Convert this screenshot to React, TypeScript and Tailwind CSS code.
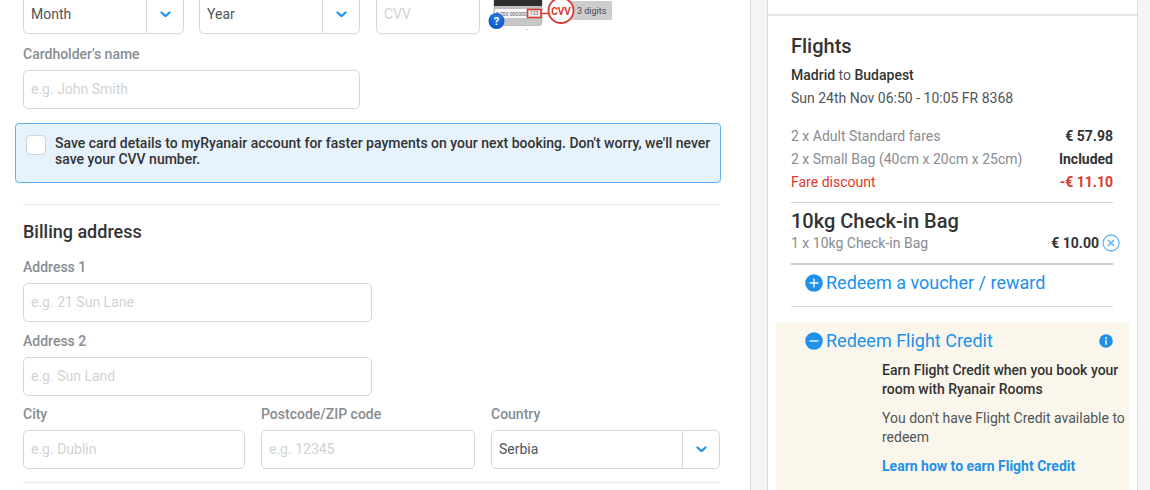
import React, { useState } from 'react';

const inputClass =
    'h-[39px] w-full rounded-[5px] border border-[#d5d9da] bg-white px-[7px] pb-0.5 text-sm text-[#4f5559] placeholder:text-[#cfd3d5] outline-none focus:border-[#2091eb]';

interface FieldProps {
    id: string;
    label: string;
    className?: string;
    children: React.ReactNode;
}

function Field({ id, label, className = '', children }: FieldProps) {
    return (
        <div className={className}>
            <label htmlFor={id} className="mb-1.5 block text-sm leading-5 font-medium text-[#878c91]">
                {label}
            </label>
            {children}
        </div>
    );
}

interface SelectBoxProps {
    id: string;
    label?: string;
    options: string[];
    className?: string;
}

function SelectBox({ id, label, options, className = '' }: SelectBoxProps) {
    return (
        <div className={`relative ${className}`}>
            <select
                id={id}
                aria-label={label}
                className="h-[39px] w-full appearance-none rounded-[5px] border border-[#d5d9da] bg-white pr-10 pb-0.5 pl-[7px] text-sm text-[#4f5559] outline-none"
            >
                {options.map((option) => (
                    <option key={option}>{option}</option>
                ))}
            </select>
            <span className="pointer-events-none absolute inset-y-0 right-0 flex w-[38px] items-center justify-center border-l border-[#d5d9da]">
                <svg className="h-[7px] w-[11px]" viewBox="0 0 11 7" fill="none" stroke="#2091eb" strokeWidth="2.2">
                    <path strokeLinecap="round" strokeLinejoin="round" d="M1.5 1.5C2.6 2.4 4 4 5.5 5C7 4 8.4 2.4 9.5 1.5" />
                </svg>
            </span>
        </div>
    );
}

// Back of the card, with the security code called out
function CvvHint() {
    return (
        <svg
            className="h-[39px] w-[126px] shrink-0"
            viewBox="0 -5 126 39"
            fontFamily="Roboto, sans-serif"
            role="img"
            aria-label="CVV, 3 digits"
        >
            <defs>
                <linearGradient id="card" x1="0" y1="0" x2="0" y2="1">
                    <stop offset="0" stopColor="#b4b4b4" />
                    <stop offset="1" stopColor="#c9c9c9" />
                </linearGradient>
                <radialGradient id="help" cx="0.5" cy="0.3" r="0.7">
                    <stop offset="0" stopColor="#2d7be6" />
                    <stop offset="1" stopColor="#0b55c4" />
                </radialGradient>
            </defs>
            <rect x="7" y="-12" width="48" height="37.5" rx="3" fill="url(#card)" stroke="#a3a3a3" strokeWidth="0.6" />
            <rect x="7" y="-5" width="48" height="11" fill="#2f2d2e" />
            <rect x="8" y="9" width="33" height="9" fill="#fafafa" />
            <text x="9" y="15.5" fontSize="5" fill="#555">
                8 700 000000
            </text>
            <rect x="40.500" y="9.5" width="13.5" height="8" fill="#f6eeee" stroke="#d93a30" strokeWidth="1.6" />
            <text x="43" y="15.3" fontSize="5" fill="#666">
                123
            </text>
            <path d="M55 13.5H63" stroke="#d93a30" strokeWidth="1.5" />
            <rect x="80" y="1" width="45" height="19" rx="1.5" fill="#cdcdcd" />
            <circle cx="74" cy="10.5" r="12.5" fill="#fff" stroke="#d93a30" strokeWidth="1.8" />
            <text x="74" y="14.5" fontSize="10" fontWeight="700" fill="#d93a30" textAnchor="middle">
                CVV
            </text>
            <text x="90" y="14" fontSize="9" fill="#4a4a4a">
                3 digits
            </text>
            <circle cx="9.5" cy="21" r="8" fill="url(#help)" />
            <text x="9.5" y="25" fontSize="11" fontWeight="700" fill="#fff" textAnchor="middle">
                ?
            </text>
            <circle cx="40" cy="29.5" r="0.6" fill="#5ea8e8" />
        </svg>
    );
}

function ToggleIcon({ open }: { open: boolean }) {
    return (
        <svg className="h-[18px] w-[18px] shrink-0" viewBox="0 0 18 18" fill="none" stroke="#fff" strokeWidth="1.3">
            <circle cx="9" cy="9" r="8.8" fill="#2091eb" stroke="none" />
            <path d={open ? 'M4.5 9H13.5' : 'M4.5 9H13.5M9 4.5V13.5'} />
        </svg>
    );
}

const fares = [
    { name: '2 x Adult Standard fares', price: '€ 57.98', discount: false },
    { name: '2 x Small Bag (40cm x 20cm x 25cm)', price: 'Included', discount: false },
    { name: 'Fare discount', price: '-€ 11.10', discount: true },
];

export default function App() {
    const [saveCard, setSaveCard] = useState(false);
    const [creditOpen, setCreditOpen] = useState(true);

    return (
        <div className="flex h-screen gap-4 overflow-hidden bg-[#f2f5f4] pr-3 font-['Roboto',sans-serif] text-sm text-[#4f5559]">
            {/* Payment form */}
            <main className="min-w-0 flex-1 border-r border-[#d8dddf] bg-white pr-[30px] pl-[23px]">
                <form className="-mt-[5px]">
                    <div className="flex">
                        <SelectBox id="month" label="Expiry month" options={['Month']} className="w-[161px]" />
                        <SelectBox id="year" label="Expiry year" options={['Year']} className="ml-[15px] w-[161px]" />
                        <input id="cvv" aria-label="CVV" placeholder="CVV" className={`${inputClass} mr-[7px] ml-4 max-w-[104px]`} />
                        <CvvHint />
                    </div>

                    <Field id="cardholder" label="Cardholder's name" className="mt-2.5 w-[337px]">
                        <input id="cardholder" placeholder="e.g. John Smith" className={inputClass} />
                    </Field>

                    <label className="mt-3.5 -mr-px -ml-2 flex min-h-[60px] gap-[9px] rounded-[4px] border border-[#5fb0f0] bg-[#e6f2fc] pt-[11px] pr-1 pl-2.5">
                        <input
                            type="checkbox"
                            checked={saveCard}
                            onChange={(e) => setSaveCard(e.target.checked)}
                            className="h-5 w-5 shrink-0 appearance-none rounded-[4px] border border-[#d0d4d6] bg-white checked:bg-[#2091eb]"
                        />
                        <span className="leading-4 font-medium text-[#333]">
                            Save card details to myRyanair account for faster payments on your next booking. Don't worry, we'll never
                            save your CVV number.
                        </span>
                    </label>

                    <hr className="mt-[21px] border-[#ececec]" />

                    <h2 className="mt-[15px] text-lg leading-6 font-medium text-[#333]">Billing address</h2>
                    <Field id="address1" label="Address 1" className="mt-[13px] w-[349px]">
                        <input id="address1" placeholder="e.g. 21 Sun Lane" className={inputClass} />
                    </Field>
                    <Field id="address2" label="Address 2" className="mt-[9px] w-[349px]">
                        <input id="address2" placeholder="e.g. Sun Land" className={inputClass} />
                    </Field>
                    <div className="mt-2 flex gap-4">
                        <Field id="city" label="City" className="w-[222px]">
                            <input id="city" placeholder="e.g. Dublin" className={inputClass} />
                        </Field>
                        <Field id="postcode" label="Postcode/ZIP code" className="w-[214px]">
                            <input id="postcode" placeholder="e.g. 12345" className={inputClass} />
                        </Field>
                        <Field id="country" label="Country" className="flex-1">
                            <SelectBox id="country" options={['Serbia']} />
                        </Field>
                    </div>
                    <hr className="mt-[13px] border-[#ececec]" />
                </form>
            </main>

            {/* Booking summary */}
            <aside className="w-[371px] shrink-0 border-x border-[#d8dddf] bg-white pt-3.5">
                <section className="border-t-2 border-[#e4e7e8] pt-[18px] pr-6 pl-[23px]">
                    <h2 className="text-xl leading-6 font-medium text-[#333]">Flights</h2>
                    <p className="mt-1.5 leading-[23px]">
                        <strong className="font-medium text-[#333]">Madrid</strong> to{' '}
                        <strong className="font-medium text-[#333]">Budapest</strong>
                    </p>
                    <p className="leading-[23px]">Sun 24th Nov 06:50 - 10:05 FR 8368</p>

                    <ul className="mt-[15px] border-b border-[#cfd3d5] pb-2 leading-[23px]">
                        {fares.map((fare) => (
                            <li key={fare.name} className={`flex justify-between ${fare.discount ? 'text-[#d93a2b]' : 'text-[#878c91]'}`}>
                                <span>{fare.name}</span>
                                <span className={`font-bold ${fare.discount ? '' : 'text-[#333]'}`}>{fare.price}</span>
                            </li>
                        ))}
                    </ul>

                    <h2 className="mt-1.5 text-xl leading-6 font-medium text-[#333]">10kg Check-in Bag</h2>
                    <div className="flex items-center justify-between leading-5 text-[#878c91]">
                        <span>1 x 10kg Check-in Bag</span>
                        <span className="-mr-[7px] flex items-center gap-[3px] font-bold text-[#333]">
                            € 10.00
                            <button type="button" aria-label="Remove bag">
                                <svg className="block h-[18px] w-[18px]" viewBox="0 0 18 18" fill="none" stroke="#68b5f2" strokeWidth="1.3">
                                    <circle cx="9" cy="9" r="8" />
                                    <path strokeWidth="1.7" d="M6 6L12 12M12 6L6 12" />
                                </svg>
                            </button>
                        </span>
                    </div>

                    <div className="mt-2.5 border-t-2 border-b border-t-[#c8cdcf] border-b-[#d5d9da] pt-1 pb-[9px] pl-3.5">
                        <button type="button" className="flex items-center gap-[3px] text-lg leading-7 text-[#2091eb]">
                            <ToggleIcon open={false} />
                            Redeem a voucher / reward
                        </button>
                    </div>
                </section>

                <section className="mx-2 mt-4 h-full bg-[#fbf6eb] pt-1">
                    <div className="flex items-center justify-between pr-4 pl-[29px]">
                        <button
                            type="button"
                            aria-expanded={creditOpen}
                            onClick={() => setCreditOpen(!creditOpen)}
                            className="flex items-center gap-[3px] text-lg leading-7 text-[#2091eb]"
                        >
                            <ToggleIcon open={creditOpen} />
                            Redeem Flight Credit
                        </button>
                        <button type="button" aria-label="About Flight Credit">
                            <svg className="block h-3.5 w-3.5" viewBox="0 0 14 14" fill="#fff">
                                <circle cx="7" cy="7" r="6.8" fill="#2091eb" />
                                <circle cx="7" cy="4" r="0.9" />
                                <rect x="6.3" y="5.8" width="1.4" height="5" />
                            </svg>
                        </button>
                    </div>
                    {creditOpen && (
                        <div className="pr-1 pl-[106px] leading-[19px]">
                            <p className="mt-1.5 font-medium text-[#333]">Earn Flight Credit when you book your room with Ryanair Rooms</p>
                            <p className="mt-2.5">You don't have Flight Credit available to redeem</p>
                            <a href="#flight-credit" className="mt-2.5 block font-bold text-[#2091eb]">
                                Learn how to earn Flight Credit
                            </a>
                        </div>
                    )}
                </section>
            </aside>
        </div>
    );
}
